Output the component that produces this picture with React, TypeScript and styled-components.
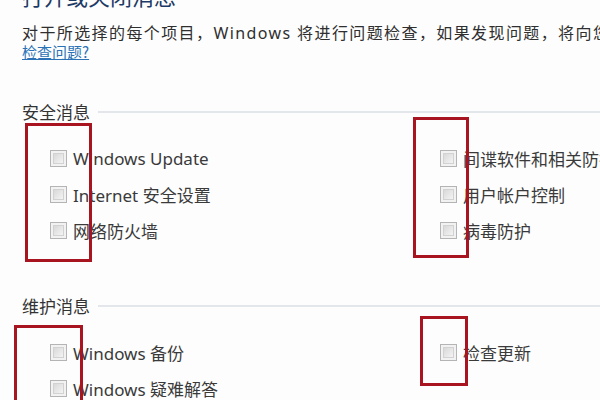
import React from 'react';
import styled, { createGlobalStyle } from 'styled-components';

const GlobalStyle = createGlobalStyle`
  html, body {
    margin: 0;
    padding: 0;
    background: #ffffff;
    overflow: hidden;
  }
  body {
    font-family: "Noto Sans", "Noto Sans CJK SC", sans-serif;
  }
`;

const Root = styled.section`
  position: relative;
  width: 600px;
  height: 400px;
  overflow: hidden;
  background: #fdfdfd;
`;

const Content = styled.div`
  padding-left: 22px;
  margin-top: -19px;
`;

const Title = styled.div`
  font-family: "Noto Sans CJK SC", sans-serif;
  font-size: 22px;
  line-height: 28px;
  color: #1d3a66;
  white-space: nowrap;
`;

const Intro = styled.div`
  margin-top: 16px;
  font-family: "Noto Sans", "Noto Sans CJK SC", sans-serif;
  font-size: 16px;
  line-height: 17px;
  letter-spacing: 1.4px;
  color: #2f2f2f;
  white-space: nowrap;
`;

const HelpLink = styled.a`
  display: block;
  width: fit-content;
  margin-top: 1px;
  font-family: "Noto Sans CJK SC", sans-serif;
  font-size: 15px;
  line-height: 17px;
  color: #2a72b5;
  text-decoration: underline;
`;

const Section = styled.div<{ $top: number }>`
  margin-top: ${(p) => p.$top}px;
`;

const Heading = styled.div`
  display: flex;
  align-items: center;
  gap: 8px;
  font-family: "Noto Sans CJK SC", sans-serif;
  font-size: 17px;
  line-height: 22px;
  color: #333;
  &::after {
    content: '';
    flex: 1;
    height: 2px;
    background: #e3e6ea;
  }
`;

const Grid = styled.div`
  display: grid;
  grid-template-columns: 390px 1fr;
  padding-left: 28px;
  margin-top: 23px;
`;

const Column = styled.div`
  display: flex;
  flex-direction: column;
  gap: 12px;
`;

const Row = styled.label`
  display: flex;
  align-items: center;
  gap: 6px;
  height: 24px;
  font-family: "Noto Sans", "Noto Sans CJK SC", sans-serif;
  font-size: 17px;
  color: #3a3a3a;
  white-space: nowrap;
`;

const Box = styled.span`
  box-sizing: border-box;
  width: 17px;
  height: 17px;
  flex: none;
  border: 1px solid #b4b4b4;
  background: #f2f2f2;
  display: flex;
  align-items: center;
  justify-content: center;
  &::before {
    content: '';
    width: 11px;
    height: 11px;
    border: 1px solid #d2d2d2;
    box-sizing: border-box;
    background: linear-gradient(135deg, #d9d9d9, #f4f4f4);
  }
`;

const Mark = styled.div`
  position: absolute;
  box-sizing: border-box;
  border: 3px solid #a8141f;
`;

const Check = ({ label }: { label: string }) => (
  <Row>
    <Box />
    {label}
  </Row>
);

const marks = [
  { left: 25, top: 123, width: 67, height: 139 },
  { left: 413, top: 117, width: 56, height: 141 },
  { left: 14, top: 325, width: 69, height: 100 },
  { left: 420, top: 316, width: 48, height: 70 },
];

export default function App() {
  return (
    <Root>
      <GlobalStyle />
      <Content>
        <Title>打开或关闭消息</Title>
        <Intro>对于所选择的每个项目，Windows 将进行问题检查，如果发现问题，将向您发送消息。</Intro>
        <HelpLink>检查问题?</HelpLink>
        <Section $top={41}>
          <Heading>安全消息</Heading>
          <Grid>
            <Column>
              <Check label="Windows Update" />
              <Check label="Internet 安全设置" />
              <Check label="网络防火墙" />
            </Column>
            <Column>
              <Check label="间谍软件和相关防护" />
              <Check label="用户帐户控制" />
              <Check label="病毒防护" />
            </Column>
          </Grid>
        </Section>
        <Section $top={53}>
          <Heading>维护消息</Heading>
          <Grid>
            <Column>
              <Check label="Windows 备份" />
              <Check label="Windows 疑难解答" />
            </Column>
            <Column>
              <Check label="检查更新" />
            </Column>
          </Grid>
        </Section>
      </Content>
      {marks.map((m, i) => (
        <Mark key={i} style={{ left: m.left, top: m.top, width: m.width, height: m.height }} />
      ))}
    </Root>
  );
}
